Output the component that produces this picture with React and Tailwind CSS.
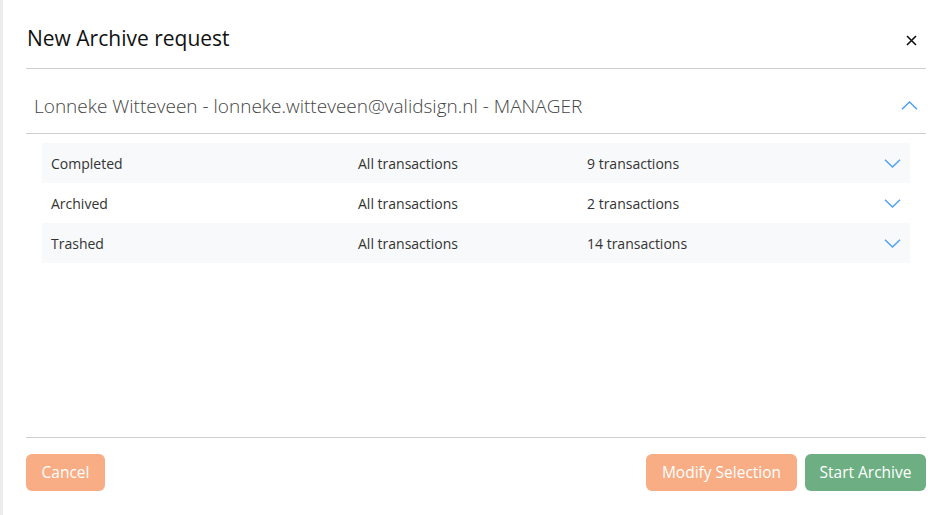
import React from 'react';

const rows = [
  { status: 'Completed', range: 'All transactions', count: '9 transactions' },
  { status: 'Archived', range: 'All transactions', count: '2 transactions' },
  { status: 'Trashed', range: 'All transactions', count: '14 transactions' },
];

function Chevron({ up }) {
  return (
    <svg width="17" height="9" viewBox="0 0 17 9" fill="none" stroke="#4da3f5" strokeWidth="1.5">
      {up ? <path d="M1 8.2 L8.5 1 L16 8.2" /> : <path d="M1 0.8 L8.5 8 L16 0.8" />}
    </svg>
  );
}

function App() {
  return (
    <div
      className="w-[950px] h-[515px] bg-white border-l-[3px] border-[#ececec] flex flex-col text-[#333]"
      style={{ fontFamily: '"Segoe UI", "Open Sans", sans-serif' }}
    >
      <div className="ml-[23px] mr-[24px] flex flex-col flex-1">
        {/* header */}
        <div className="h-[69px] flex items-center justify-between border-b border-[#cfcfcf]">
          <h1 className="text-[21px] text-[#111] pt-[9px] ml-[1px]">New Archive request</h1>
          <svg width="11" height="11" viewBox="0 0 11 11" className="mr-[9px] mt-[12px]" stroke="#111" strokeWidth="1.6">
            <path d="M1 1 L10 10 M10 1 L1 10" />
          </svg>
        </div>

        {/* user */}
        <div className="h-[65px] flex items-center justify-between border-b border-[#cfcfcf]">
          <span className="text-[19px] text-[#444] ml-[8px] font-light pt-[10px]">
            Lonneke Witteveen - lonneke.witteveen@validsign.nl - MANAGER
          </span>
          <div className="mr-[8px] pt-[8px]">
            <Chevron up />
          </div>
        </div>

        {/* rows */}
        <div className="px-[16px] pt-[9px] flex-1">
          {rows.map((r, i) => (
            <div
              key={r.status}
              className={`h-[40px] flex items-center text-[14px] text-[#333] ${i % 2 === 0 ? 'bg-[#f8f9fa]' : 'bg-white'}`}
            >
              <span className="w-[316px] pl-[9px]">{r.status}</span>
              <span className="w-[229px]">{r.range}</span>
              <span className="flex-1">{r.count}</span>
              <div className="mr-[9px]">
                <Chevron />
              </div>
            </div>
          ))}
        </div>

        {/* footer */}
        <div className="h-[78px] border-t border-[#cfcfcf] flex items-start justify-between pt-[16px]">
          <button className="h-[37px] w-[79px] rounded-[6px] bg-[#f9ad85] text-white text-[15.5px]">
            Cancel
          </button>
          <div className="flex gap-[8px]">
            <button className="h-[37px] w-[151px] rounded-[6px] bg-[#f9ad85] text-white text-[15.5px]">
              Modify Selection
            </button>
            <button className="h-[37px] w-[121px] rounded-[6px] bg-[#6daf82] text-white text-[15.5px]">
              Start Archive
            </button>
          </div>
        </div>
      </div>
    </div>
  );
}

export default App;
